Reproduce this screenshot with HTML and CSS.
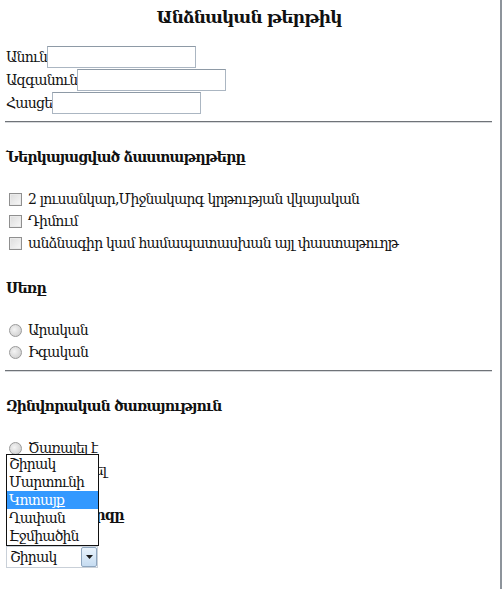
FILE: index.html
```html
<!DOCTYPE html>
<html lang="hy">
<head>
<meta charset="utf-8">
<title>Անձնական թերթիկ</title>
<link rel="stylesheet" href="styles.css">
</head>
<body>
<div class="page">
  <h1 class="title">Անձնական թերթիկ</h1>
  <div class="fields">
    <div class="field"><span>Անուն</span><span class="input"></span></div>
    <div class="field"><span>Ազգանուն</span><span class="input"></span></div>
    <div class="field"><span>Հասցե</span><span class="input"></span></div>
  </div>
  <div class="rule"></div>

  <h4 class="head">Ներկայացված ձաստաթղթերը</h4>
  <div class="list">
    <div class="row"><span class="check"></span><span>2 լուսանկար,Միջնակարգ կրթության վկայական</span></div>
    <div class="row"><span class="check"></span><span>Դիմում</span></div>
    <div class="row"><span class="check"></span><span>անձնագիր կամ համապատասխան այլ փաստաթուղթ</span></div>
  </div>

  <h4 class="head">Սեռը</h4>
  <div class="list">
    <div class="row"><span class="radio"></span><span>Արական</span></div>
    <div class="row"><span class="radio"></span><span>Իգական</span></div>
  </div>
  <div class="rule"></div>

  <h4 class="head">Զինվորական ծառայություն</h4>
  <div class="list">
    <div class="row"><span class="radio"></span><span>Ծառայել է</span></div>
    <div class="row"><span class="radio"></span><span>Չի ծառայել</span></div>
  </div>

  <h4 class="head sel-head">Ընտրեք մարզը</h4>
  <div class="select-wrap">
    <div class="select"><span class="sel-text">Շիրակ</span><span class="sel-btn"><svg width="7" height="4" viewBox="0 0 7 4"><path d="M0 0H7L3.5 4Z" fill="#1a1a1a"/></svg></span></div>
    <ul class="dropdown">
      <li>Շիրակ</li>
      <li>Մարտունի</li>
      <li class="active">Կոտայք</li>
      <li>Ղափան</li>
      <li>Էջմիածին</li>
    </ul>
  </div>
</div>
</body>
</html>
```
FILE: styles.css
```css
html, body {
  margin: 0;
  padding: 0;
  background: #fff;
}
body {
  font-family: "DejaVu Serif", "DejaVu Sans", serif;
  font-size: 14px;
  letter-spacing: -0.8px;
  color: #111;
}
.page {
  width: 502px;
  height: 589px;
  box-sizing: border-box;
  border-right: 2px solid #8d949b;
  padding: 0 8px 0 6px;
  overflow: hidden;
}
.title {
  margin: 3px 0 14px;
  font-size: 17px;
  letter-spacing: -0.9px;
  line-height: 28px;
  text-align: center;
  font-weight: bold;
}
.fields {
  display: flex;
  flex-direction: column;
}
.field {
  display: flex;
  align-items: center;
  height: 23px;
}
.input {
  display: inline-block;
  width: 149px;
  height: 22px;
  box-sizing: border-box;
  border: 1px solid #abb6c2;
  border-top-color: #8e9aa6;
  background: #fff;
}
.rule {
  margin: 7px 0 0 -1px;
  height: 0;
  border-top: 1px solid #6f7378;
  border-bottom: 1px solid #d7d9dc;
}
.head {
  margin: 24px 0 21px;
  font-size: 14px;
  letter-spacing: -0.8px;
  line-height: 20px;
  font-weight: bold;
}
.list {
  display: flex;
  flex-direction: column;
}
.row {
  display: flex;
  align-items: center;
  height: 22px;
  gap: 6px;
  padding-left: 3px;
}
.check {
  width: 13px;
  height: 13px;
  box-sizing: border-box;
  border: 1px solid #8f8f8f;
  background: linear-gradient(135deg, #dcdcdc, #f8f8f8);
  box-shadow: inset 0 0 0 1px #eaeaea;
  flex: none;
}
.radio {
  width: 13px;
  height: 13px;
  box-sizing: border-box;
  border-radius: 50%;
  border: 1px solid #9a9a9a;
  background: radial-gradient(circle at 40% 40%, #f4f4f4, #c8c8c8);
  flex: none;
}
.sel-head {
  margin-bottom: 21px;
}
.select-wrap {
  position: relative;
  width: 92px;
}
.select {
  display: flex;
  align-items: center;
  width: 92px;
  height: 22px;
  box-sizing: border-box;
  border: 1px solid #c9d0d8;
  background: #fff;
  font-size: 14px;
}
.sel-text {
  flex: 1;
  padding-left: 3px;
}
.sel-btn {
  width: 16px;
  height: 20px;
  box-sizing: border-box;
  border: 1px solid #8ea6bf;
  border-radius: 2px;
  background: linear-gradient(#e9f3fc, #c6dcf1);
  display: flex;
  align-items: center;
  justify-content: center;
}
.dropdown {
  position: absolute;
  left: 0;
  bottom: 22px;
  width: 93px;
  box-sizing: border-box;
  margin: 0;
  padding: 0;
  list-style: none;
  border: 1px solid #111;
  background: #fff;
  font-size: 14px;
}
.dropdown li {
  height: 18px;
  line-height: 18px;
  padding-left: 2px;
}
.dropdown li.active {
  background: #3399ff;
  color: #fff;
}
```
